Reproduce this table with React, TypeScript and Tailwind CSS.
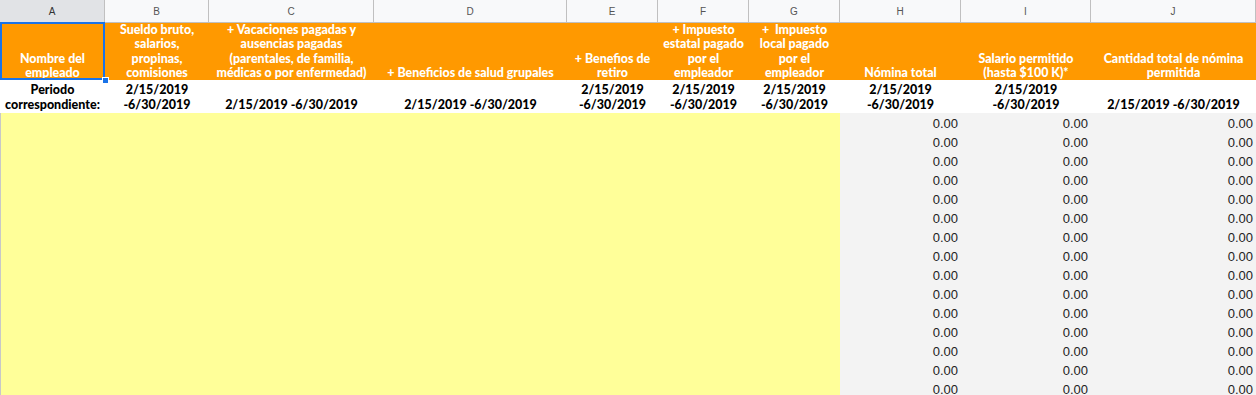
import React from 'react';

const cols = ['A', 'B', 'C', 'D', 'E', 'F', 'G', 'H', 'I', 'J'];

const headers = [
    'Nombre del\nempleado',
    'Sueldo bruto,\nsalarios,\npropinas,\ncomisiones',
    '+ Vacaciones pagadas y\nausencias pagadas\n(parentales, de familia,\nmédicas o por enfermedad)',
    '+ Beneficios de salud grupales',
    '+ Benefios de\nretiro',
    '+ Impuesto\nestatal pagado\npor el\nempleador',
    '+  Impuesto\nlocal pagado\npor el\nempleador',
    'Nómina total',
    'Salario permitido\n(hasta $100 K)*',
    'Cantidad total de nómina\npermitida',
];

const wrapped = '2/15/2019\n-6/30/2019';
const oneLine = '2/15/2019 -6/30/2019';
const periods = ['Periodo\ncorrespondiente:', wrapped, oneLine, oneLine, wrapped, wrapped, wrapped, wrapped, wrapped, oneLine];

const grid = 'grid grid-cols-[105px_104px_165px_193px_91px_91px_91px_121px_130px_165px]';

const App = () => {
    const rows = Array.from({ length: 15 });

    return (
        <div className="w-[1256px] h-[395px] overflow-hidden bg-white font-['Lato','Liberation_Sans',sans-serif]">
            {/* column letters */}
            <div className={grid + ' h-[23px] border-b border-[#c0c0c0]'}>
                {cols.map((c, i) => (
                    <div
                        key={c}
                        className={
                            'flex items-center justify-center border-r border-[#c0c0c0] text-[10px] font-["Liberation_Sans",sans-serif] ' +
                            (i === 0 ? 'bg-[#e1e3e6] text-[#333]' : 'bg-[#f8f9fa] text-[#555]')
                        }
                    >
                        {c}
                    </div>
                ))}
            </div>

            {/* orange header */}
            <div className={grid + ' h-[57px] bg-[#ff9900]'}>
                {headers.map((h, i) => (
                    <div key={i} className="relative flex items-end justify-center">
                        <div className="text-center text-white font-black text-[12.4px] leading-[14.3px] whitespace-pre">{h}</div>
                        {i === 0 && (
                            <>
                                <div className="absolute inset-0 -top-[1px] border-2 border-[#1a73e8]"></div>
                                <div className="absolute -right-[4px] -bottom-[4px] w-[7px] h-[7px] bg-[#1a73e8] border border-white"></div>
                            </>
                        )}
                    </div>
                ))}
            </div>

            {/* period row */}
            <div className={grid + ' h-[33px] bg-white'}>
                {periods.map((p, i) => (
                    <div key={i} className="flex items-end justify-center pb-[1px]">
                        <div className="text-center text-black font-black text-[12.5px] leading-[14.5px] whitespace-pre">{p}</div>
                    </div>
                ))}
            </div>

            {/* data rows */}
            {rows.map((_, r) => (
                <div key={r} className={grid + ' h-[19px]'}>
                    <div className="col-span-7 bg-[#ffff99] border-l border-[#c8c8c8]"></div>
                    {[0, 1, 2].map((k) => (
                        <div
                            key={k}
                            className="bg-[#f3f3f3] text-right pr-[3px] pt-[2px] text-[13px] leading-[17px] text-[#222] font-['Liberation_Sans',Arial,sans-serif]"
                        >
                            0.00
                        </div>
                    ))}
                </div>
            ))}
        </div>
    );
};

export default App;
